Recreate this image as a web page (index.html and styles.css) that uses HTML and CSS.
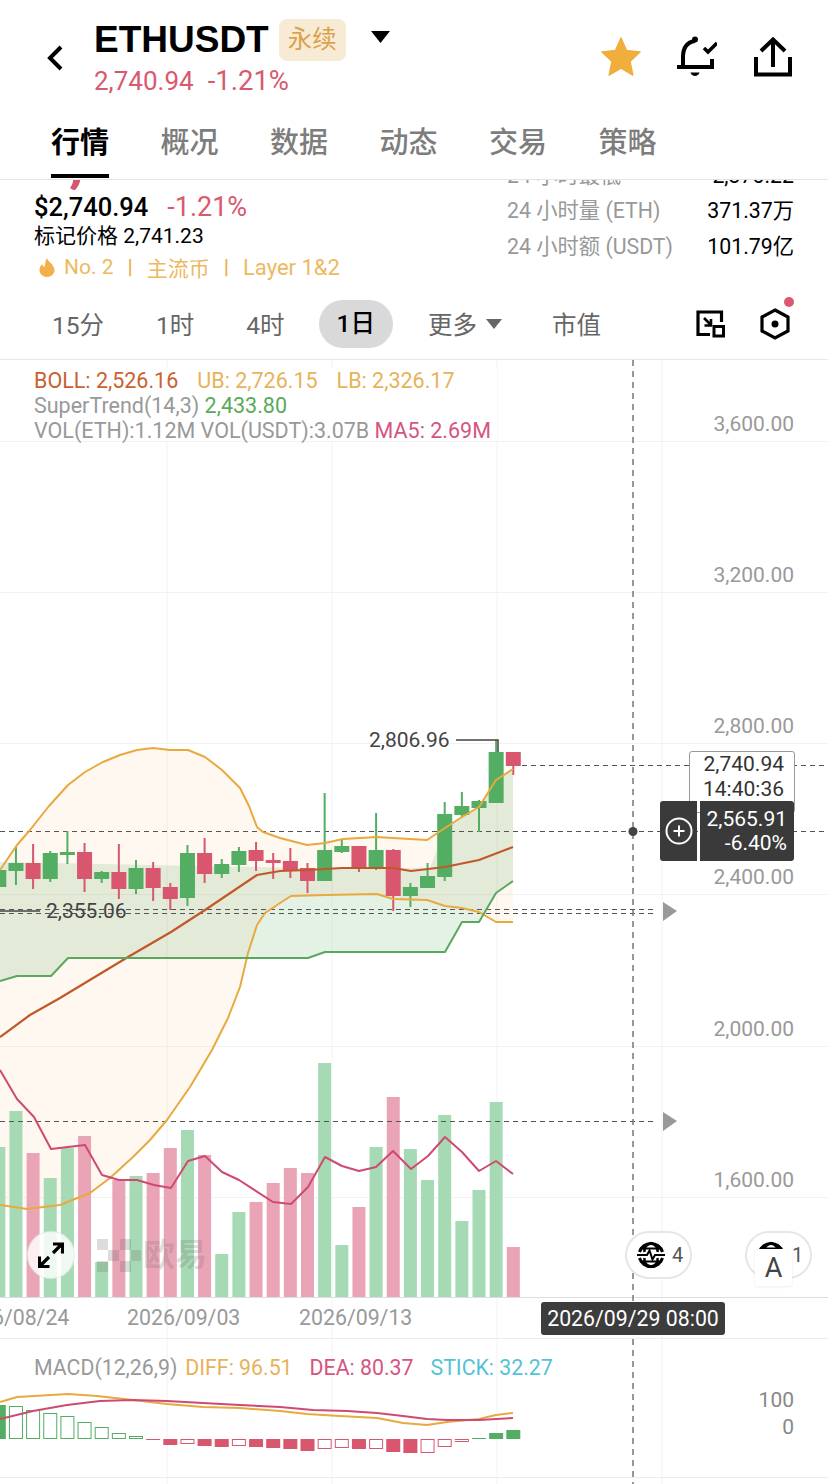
FILE: index.html
```html
<!DOCTYPE html>
<html lang="zh-CN">
<head>
    <meta charset="UTF-8">
    <meta name="viewport" content="width=device-width, initial-scale=1.0">
    <title>ETHUSDT 永续</title>
    <link rel="stylesheet" href="styles.css">
</head>
<body>

<header class="topbar">
    <div class="title-row">
        <svg class="back" width="16" height="26" viewBox="0 0 16 26"><path d="M14 2 L3 13 L14 24" fill="none" stroke="#000" stroke-width="4"/></svg>
        <div class="title-col">
            <div class="symbol-line">
                <span class="symbol">ETHUSDT</span>
                <span class="badge">永续</span>
                <svg class="caret" width="19" height="12" viewBox="0 0 19 12"><path d="M0 0 H19 L9.5 12 Z" fill="#000"/></svg>
            </div>
            <div class="sub-price"><span>2,740.94</span><span class="sub-change">-1.21%</span></div>
        </div>
        <div class="title-icons">
            <svg class="star" width="40" height="40" viewBox="0 0 40 40"><path d="M20 1 L25.5 13.5 L39 15 L29 24.5 L31.8 38 L20 31 L8.2 38 L11 24.5 L1 15 L14.5 13.5 Z" fill="#f0ae3c" stroke="#f0ae3c" stroke-width="1.5" stroke-linejoin="round"/></svg>
            <svg width="40" height="41" viewBox="0 0 40 41">
                <path d="M0 31 H37" stroke="#000" stroke-width="4"/>
                <path d="M6 30 V21 C6 11 11 6 18 5 M35 23 V30" fill="none" stroke="#000" stroke-width="4"/>
                <circle cx="18" cy="3.5" r="3"/>
                <path d="M13.5 36.5 H22.5 C21.5 41 14.5 41 13.5 36.5 Z"/>
                <path d="M27 12 L31 16 L40 7" fill="none" stroke="#000" stroke-width="3.5"/>
            </svg>
            <svg width="38" height="40" viewBox="0 0 38 40"><path d="M2 20 V37.5 H36 V20 M19 30 V3 M7 14 L19 2.5 L31 14" fill="none" stroke="#000" stroke-width="4"/></svg>
        </div>
    </div>
    <nav class="tabs">
        <a class="tab active">行情</a>
        <a class="tab">概况</a>
        <a class="tab">数据</a>
        <a class="tab">动态</a>
        <a class="tab">交易</a>
        <a class="tab">策略</a>
    </nav>
</header>

<section class="info">
    <div class="info-left">
        <div class="ghost-price"><span>,</span></div>
        <div class="price-line"><span class="last">$2,740.94</span><span class="change">-1.21%</span></div>
        <div class="mark-line">标记价格 2,741.23</div>
        <div class="tag-line">
            <svg width="16" height="19" viewBox="0 0 16 19"><path d="M8 0 C9 4 15 6 15.5 12 C15.5 16 12 19 8 19 C4 19 .5 16 .5 12 C.5 9 2 7 3.5 6 C3.5 8 4.5 9 5.5 9 C6.5 6 6 3 8 0 Z" fill="#f2b04c"/></svg>
            <span>No. 2</span><span class="sep">|</span><span>主流币</span><span class="sep">|</span><span class="layer">Layer 1&amp;2</span>
        </div>
    </div>
    <div class="info-right">
        <div class="stat"><span>24 小时最低</span><b>2,370.22</b></div>
        <div class="stat"><span>24 小时量 (ETH)</span><b>371.37万</b></div>
        <div class="stat"><span>24 小时额 (USDT)</span><b>101.79亿</b></div>
    </div>
</section>

<div class="periods">
    <a class="period">15分</a>
    <a class="period">1时</a>
    <a class="period">4时</a>
    <a class="period current">1日</a>
    <a class="period more">更多<i class="more-caret"></i></a>
    <a class="period">市值</a>
    <div class="period-icons">
        <svg width="29" height="28" viewBox="0 0 29 28">
            <path d="M14 24.5 H2 V2 H25.5 V12" fill="none" stroke="#000" stroke-width="3.2"/>
            <path d="M8 8 L15 15 M15 9 V15.5 H8.5" fill="none" stroke="#000" stroke-width="2.6"/>
            <rect x="18" y="16.5" width="9.5" height="9.5" fill="none" stroke="#000" stroke-width="3"/>
        </svg>
        <span class="hex-wrap">
            <svg width="30" height="32" viewBox="0 0 30 32"><path d="M15 2 L28 9 V23 L15 30 L2 23 V9 Z" fill="none" stroke="#000" stroke-width="3.2"/><circle cx="15" cy="16" r="3.5"/></svg>
            <i class="red-dot"></i>
        </span>
    </div>
</div>

<main class="chart">
    <svg id="plot" class="plot" width="828" height="1124" viewBox="0 360 828 1124"></svg>

    <div class="legend">
        <div><span class="c-boll">BOLL: 2,526.16</span><span class="c-band">UB: 2,726.15</span><span class="c-band">LB: 2,326.17</span></div>
        <div><span class="c-gray">SuperTrend(14,3)</span> <span class="c-green">2,433.80</span></div>
        <div><span class="c-gray">VOL(ETH):1.12M</span> <span class="c-gray">VOL(USDT):3.07B</span> <span class="c-ma">MA5: 2.69M</span></div>
    </div>

    <span class="axis-price p3600">3,600.00</span>
    <span class="axis-price p3200">3,200.00</span>
    <span class="axis-price p2800">2,800.00</span>
    <span class="axis-price p2400">2,400.00</span>
    <span class="axis-price p2000">2,000.00</span>
    <span class="axis-price p1600">1,600.00</span>

    <span class="mark-label high">2,806.96</span>
    <span class="mark-label low">2,355.06</span>

    <div class="now-box">2,740.94<br>14:40:36</div>
    <div class="cross-tip">
        <div class="cross-add">
            <svg width="28" height="28" viewBox="0 0 28 28"><circle cx="14" cy="14" r="12.5" fill="none" stroke="#fff" stroke-width="2"/><path d="M14 8.5 V19.5 M8.5 14 H19.5" stroke="#fff" stroke-width="2"/></svg>
        </div>
        <div class="cross-value">2,565.91<br>-6.40%</div>
    </div>

    <button class="expand">
        <svg width="26" height="26" viewBox="0 0 26 26"><path d="M15 11 L24 2 M15 2 H24.5 V11.5 M11 15 L2 24 M1.5 14.5 V24.5 H11.5" fill="none" stroke="#000" stroke-width="3.2"/></svg>
    </button>

    <div class="watermark">
        <svg width="44" height="33" viewBox="0 0 44 33">
            <rect x="0" y="0" width="11" height="11"/><rect x="0" y="22" width="11" height="11"/>
            <rect x="11" y="11" width="11" height="11"/>
            <rect x="23" y="0" width="11" height="11"/><rect x="23" y="22" width="11" height="11"/>
            <rect x="34" y="11" width="10" height="11"/>
        </svg>
        <span>欧易</span>
    </div>

    <div class="pill pill-one">
        <svg class="globe" width="28" height="28" viewBox="0 0 28 28"><use href="#globe-shape"/></svg>
        <span>4</span>
    </div>
    <div class="pill pill-two">
        <svg class="globe" width="28" height="28" viewBox="0 0 28 28"><use href="#globe-shape"/></svg>
        <span>1</span>
    </div>
    <div class="font-box">A</div>

    <span class="date-label d1">2026/08/24</span>
    <span class="date-label d2">2026/09/03</span>
    <span class="date-label d3">2026/09/13</span>
    <div class="date-tip">2026/09/29 08:00</div>

    <div class="macd-legend">
        <span class="c-gray macd-name">MACD(12,26,9)</span>
        <span class="c-band">DIFF: 96.51</span>
        <span class="c-ma">DEA: 80.37</span>
        <span class="c-stick">STICK: 32.27</span>
    </div>
    <span class="axis-price p100">100</span>
    <span class="axis-price p0">0</span>
</main>

<svg class="defs" width="0" height="0">
    <symbol id="globe-shape" viewBox="0 0 28 28">
        <path d="M2.5 11 A12 12 0 0 1 25.5 11 M2.5 17 A12 12 0 0 0 25.5 17" fill="none" stroke="#000" stroke-width="3"/>
        <path d="M14 2 C8 4 7 8 7.5 11 M14 2 C20 4 21 8 20.5 11 M14 26 C8 24 7 20 7.5 17 M14 26 C20 24 21 20 20.5 17" fill="none" stroke="#000" stroke-width="2.5"/>
        <path d="M3 7.5 H25 M3 20.5 H25" stroke="#000" stroke-width="2"/>
        <path d="M0 14 H10 L12.5 9.5 L15.5 18.5 L18 14 H28" fill="none" stroke="#000" stroke-width="2"/>
    </symbol>
</svg>

<script src="chart.js"></script>
</body>
</html>
```

FILE: styles.css
```css
/* General */
html, body {
    margin: 0;
    padding: 0;
    width: 828px;
    height: 1484px;
    overflow: hidden;
    background: #fff;
    font-family: Roboto, "Noto Sans CJK SC", sans-serif;
    color: #000;
}

svg {
    display: block;
}

.defs {
    position: absolute;
}

/* Top bar */
.topbar {
    position: relative;
    z-index: 2;
    height: 180px;
    box-sizing: border-box;
    background: #fff;
    border-bottom: 1px solid #e4e4e4;
}

.title-row {
    display: flex;
    align-items: center;
    height: 78px;
    padding: 19px 36px 0 47px;
}

.back {
    margin-right: 31px;
}

.symbol-line {
    display: flex;
    align-items: center;
    height: 42px;
}

.symbol {
    font-family: "Liberation Sans", sans-serif;
    font-size: 37px;
    font-weight: bold;
    line-height: 42px;
}

.badge {
    margin-left: 10px;
    padding: 0 9px;
    font-size: 24.5px;
    line-height: 42px;
    color: #dba24a;
    background: #f8ebd5;
    border-radius: 8px;
}

.caret {
    margin: -6px 0 0 25px;
}

.sub-price {
    display: flex;
    gap: 14px;
    margin-top: 4px;
    font-size: 26px;
    line-height: 32px;
    color: #d9596f;
}

.sub-change {
    font-size: 27.5px;
}

.title-icons {
    display: flex;
    align-items: center;
    gap: 37px;
    margin-left: auto;
    margin-top: -3px;
}

.star {
    margin-left: 1px;
    margin-right: -1px;
}

/* Tabs */
.tabs {
    display: flex;
    gap: 51.5px;
    padding: 26px 0 0 51px;
}

.tab {
    height: 52px;
    font-size: 29px;
    line-height: 40px;
    font-weight: 500;
    color: #7d7d7d;
}

.tab.active {
    height: 51px;
    color: #000;
    font-weight: 700;
    border-bottom: 4px solid #000;
}

/* Price info */
.info {
    display: flex;
    justify-content: space-between;
    height: 110px;
    padding: 0 34px;
}

/* tail of the large price that has scrolled under the top bar */
.ghost-price {
    height: 10px;
    margin: 0 0 2px 35px;
    overflow: hidden;
    font-size: 60px;
    line-height: 40px;
    font-weight: 700;
    color: #d9566f;
}

.ghost-price span {
    display: block;
    margin-top: -40px;
}

.price-line {
    display: flex;
    gap: 19px;
    font-size: 25.5px;
    line-height: 30px;
}

.last {
    font-weight: 500;
}

.change {
    font-size: 27px;
    color: #d9596f;
}

.mark-line {
    font-size: 21px;
    line-height: 29px;
}

.tag-line {
    display: flex;
    align-items: center;
    gap: 14px;
    height: 32px;
    padding-left: 5px;
    font-size: 21px;
    color: #edb95f;
}

.tag-line svg {
    margin-right: -5px;
}

.layer {
    font-size: 22px;
}

.sep {
    font-weight: 500;
    color: #e9b04e;
}

.info-right {
    width: 287px;
    margin-top: -22.5px;
}

.stat {
    display: flex;
    justify-content: space-between;
    font-size: 21.3px;
    line-height: 35.5px;
    color: #999;
}

.stat b {
    font-weight: 400;
    color: #000;
}

/* Period bar */
.periods {
    display: flex;
    align-items: center;
    height: 70px;
    box-sizing: border-box;
    padding: 0 38px 2px 52px;
    border-bottom: 1px solid #e8e8e8;
    font-size: 24.5px;
    color: #666;
}

.period {
    margin-right: 52px;
}

.period.current {
    margin: 0 35px 0 -18px;
    padding: 0 18px;
    height: 48px;
    line-height: 48px;
    font-weight: 500;
    color: #000;
    background: #d9d9d9;
    border-radius: 24px;
}

.period.more {
    display: flex;
    align-items: center;
    margin-right: 50px;
}

.more-caret {
    width: 0;
    height: 0;
    margin-left: 9px;
    border-left: 8px solid transparent;
    border-right: 8px solid transparent;
    border-top: 10px solid #666;
}

.period-icons {
    display: flex;
    align-items: center;
    gap: 35px;
    margin-left: auto;
}

.hex-wrap {
    position: relative;
}

.red-dot {
    position: absolute;
    top: -11px;
    right: -4px;
    width: 10px;
    height: 10px;
    background: #dc5770;
    border-radius: 50%;
}

/* Chart canvas */
.chart {
    position: relative;
    width: 828px;
    height: 1124px;
    overflow: hidden;
}

.plot {
    position: absolute;
    top: 0;
    left: 0;
}

.legend {
    position: absolute;
    top: 8px;
    left: 0;
    width: 463px;
    height: 73px;
    padding-left: 34px;
    background: #fff;
    font-size: 21.5px;
    line-height: 25px;
    white-space: nowrap;
}

.legend div:first-child span + span {
    margin-left: 19px;
}

.c-boll { color: #c9622f; }
.c-band { color: #e8b25a; }
.c-gray { color: #999; }
.c-green { color: #5aaa5c; }
.c-ma { color: #d6557f; }
.c-stick { color: #52c3d6; }

.axis-price {
    position: absolute;
    right: 34px;
    font-size: 21px;
    line-height: 26px;
    color: #999;
}

.p3600 { top: 51px; }
.p3200 { top: 202px; }
.p2800 { top: 353px; }
.p2400 { top: 504px; }
.p2000 { top: 656px; }
.p1600 { top: 807px; }
.p100 { top: 1027px; color: #888; }
.p0 { top: 1054px; color: #888; }

.mark-label {
    position: absolute;
    font-size: 21px;
    line-height: 26px;
    color: #444;
}

.mark-label.high {
    top: 367px;
    left: 369px;
}

.mark-label.low {
    top: 538px;
    left: 46px;
}

.now-box {
    position: absolute;
    top: 391px;
    left: 689px;
    width: 94px;
    height: 60px;
    padding-right: 10px;
    background: #fff;
    border: 1px solid #999;
    border-radius: 3px;
    font-size: 21px;
    line-height: 25px;
    text-align: right;
    color: #333;
}

.cross-tip {
    position: absolute;
    top: 441px;
    left: 660px;
    display: flex;
    width: 134px;
    height: 60px;
    color: #fff;
    font-size: 21px;
    line-height: 24px;
    text-align: right;
}

.cross-add {
    display: flex;
    align-items: center;
    justify-content: center;
    width: 37px;
    background: #3a3a3a;
    border-radius: 3px 0 0 3px;
}

.cross-value {
    width: 87px;
    margin-left: 3px;
    padding: 6px 7px 0 0;
    background: #3a3a3a;
    border-radius: 0 3px 3px 0;
    white-space: nowrap;
}

.expand {
    position: absolute;
    top: 871px;
    left: 27px;
    display: flex;
    align-items: center;
    justify-content: center;
    width: 48px;
    height: 48px;
    padding: 0;
    background: rgba(255, 255, 255, .82);
    border: 1px solid rgba(0, 0, 0, .07);
    border-radius: 50%;
}

.watermark {
    position: absolute;
    top: 879px;
    left: 97px;
    display: flex;
    align-items: center;
    gap: 2px;
    color: rgba(110, 110, 110, .24);
    fill: rgba(110, 110, 110, .24);
    font-size: 32px;
    font-weight: 700;
    line-height: 33px;
}

.pill {
    position: absolute;
    top: 871px;
    display: flex;
    align-items: center;
    gap: 7px;
    width: 67px;
    height: 48px;
    box-sizing: border-box;
    padding-left: 10px;
    background: #fff;
    border: 2px solid #e6e6e6;
    border-radius: 24px;
    font-size: 20px;
    color: #555;
}

.pill-one { left: 625px; }
.pill-two { left: 745px; }

.font-box {
    position: absolute;
    top: 889px;
    left: 755px;
    width: 37px;
    height: 37px;
    background: #fff;
    border-radius: 3px;
    box-shadow: 0 1px 3px rgba(0, 0, 0, .08);
    font-size: 27px;
    line-height: 39px;
    text-align: center;
    color: #444;
}

.date-label {
    position: absolute;
    top: 945px;
    font-size: 21.3px;
    line-height: 26px;
    color: #999;
}

.d1 { left: -44px; }
.d2 { left: 127px; }
.d3 { left: 299px; }

.date-tip {
    position: absolute;
    top: 942px;
    left: 541px;
    width: 184px;
    height: 33px;
    background: #3c3c3c;
    border-radius: 3px;
    font-size: 21.3px;
    line-height: 33px;
    text-align: center;
    color: #fff;
}

.macd-legend {
    position: absolute;
    top: 995px;
    left: 34px;
    display: flex;
    gap: 17px;
    font-size: 21.3px;
    line-height: 26px;
    white-space: nowrap;
}

.macd-name {
    margin-right: -9px;
}
```

FILE: chart.js
```js
// Daily candles, newest first. [top, bottom, wick top, wick bottom, up?] in page pixels
const candles = [
    [752, 766, 752, 775, 0], [752, 803, 740, 803, 1], [801, 808, 800, 832, 1], [806, 815, 792, 817, 1],
    [814, 877, 802, 881, 1], [876, 888, 863, 888, 1], [887, 896, 883, 907, 1], [850, 896, 849, 911, 0],
    [850, 867, 813, 870, 1], [846, 868, 846, 872, 0], [846, 852, 839, 853, 1], [850, 881, 793, 881, 1],
    [868, 881, 863, 893, 0], [861, 870, 848, 878, 0], [860, 863, 853, 879, 0], [850, 861, 842, 871, 0],
    [851, 865, 847, 872, 1], [864, 874, 859, 878, 1], [853, 874, 838, 883, 0], [853, 898, 845, 906, 1],
    [887, 899, 883, 910, 0], [868, 888, 862, 901, 0], [868, 889, 860, 894, 1], [872, 889, 844, 899, 0],
    [872, 879, 871, 883, 1], [852, 879, 843, 892, 0], [852, 855, 831, 864, 1], [853, 879, 851, 882, 1],
    [863, 879, 844, 889, 0], [863, 871, 847, 885, 1], [870, 887, 862, 910, 1]
];
const volumes = [1247, 1102, 1190, 1221, 1115, 1180, 1149, 1097, 1147, 1207, 1245, 1063, 1173, 1168, 1183, 1202,
    1212, 1254, 1155, 1130, 1148, 1173, 1176, 1180, 1262, 1136, 1148, 1178, 1153, 1111, 1147];
// MACD histogram: far end of each bar, and whether it is drawn hollow
const macd = [[1430, 0], [1433, 0], [1438, 0], [1442, 1], [1447, 1], [1453, 1], [1453, 0], [1452, 0], [1449, 1], [1449, 0],
    [1448, 1], [1449, 1], [1451, 0], [1449, 0], [1448, 0], [1447, 0], [1446, 1], [1447, 0], [1446, 0], [1444, 1],
    [1445, 0], [1440, 0], [1436, 1], [1433, 1], [1427, 1], [1422, 1], [1416, 1], [1413, 1], [1410, 1], [1406, 1], [1405, 0]];

const ub = "0,870 17,845 30,830 49,806 68,785 85,772 103,762 120,755 137,750 153,748 170,750 188,750 205,757 222,770 240,788 249,806 257,827 263,832 280,838 307,845 325,843 343,839 377,837 393,838 427,840 445,828 462,817 479,807 496,780 513,769";
const lb = "0,1205 27,1209 60,1205 90,1193 110,1178 133,1157 150,1140 167,1120 190,1087 212,1050 228,1018 240,987 248,953 257,925 265,913 280,903 291,896 325,895 377,894 393,899 427,900 445,906 462,908 479,912 496,922 513,922";
const boll = "0,1037 30,1015 60,998 128,957 171,932 205,910 257,875 280,871 308,870 342,868 393,868 411,871 445,867 479,860 513,847";
const trend = "0,981 17,976 51,976 68,958 308,958 325,952 445,952 462,922 479,922 496,893 513,881";
const trendTop = "0,862 300,868 430,868 445,828 462,817 479,807 496,780 513,769";
const ma5 = "0,1070 17,1099 34,1117 51,1149 68,1147 85,1145 102,1175 119,1180 137,1180 154,1185 171,1188 188,1161 205,1156 222,1172 239,1180 273,1202 291,1204 308,1187 325,1157 342,1166 359,1171 376,1167 393,1151 411,1169 428,1156 445,1137 462,1152 479,1171 496,1161 513,1174";
const diff = "0,1402 17,1397 68,1394 97,1396 133,1400 167,1404 203,1407 240,1408 280,1411 307,1414 340,1416 377,1418 403,1423 427,1425 447,1422 479,1419 496,1415 513,1413";
const dea = "0,1419 33,1411 67,1405 100,1401 133,1400 167,1401 203,1403 240,1405 280,1407 313,1410 347,1411 377,1413 403,1416 427,1419 447,1420 479,1420 513,1418";

const GREEN = "#53ad62", RED = "#d9566f";
const xAt = (k) => 513.3 - 17.15 * k;
let out = "";

function hline(y, x1, x2, color) {
    out += `<line x1="${x1}" x2="${x2}" y1="${y}" y2="${y}" stroke="${color}"/>`;
}
function dashed(y, x1, x2) {
    out += `<line x1="${x1}" x2="${x2}" y1="${y}" y2="${y}" stroke="#555" stroke-dasharray="5 4"/>`;
}
function poly(points, color, width) {
    out += `<polyline points="${points}" fill="none" stroke="${color}" stroke-width="${width}" stroke-linejoin="round"/>`;
}
function reversed(points) {
    return points.split(" ").reverse().join(" ");
}

// Grid
[441, 592, 743, 894, 1046, 1197].forEach((y) => hline(y + 0.5, 0, 828, "#f2f2f2"));
[167, 332, 497, 662].forEach((x) => {
    out += `<line x1="${x}" x2="${x}" y1="360" y2="1484" stroke="#f2f2f2"/>`;
});
hline(1297.5, 0, 828, "#dedede");
hline(1338.5, 0, 828, "#ececec");
hline(1477.5, 0, 828, "#ececec");

// Bands and trend area
out += `<polygon points="${ub} ${reversed(lb)}" fill="rgba(245,170,70,.08)"/>`;
out += `<polygon points="${trendTop} ${reversed(trend)}" fill="rgba(85,170,95,.16)"/>`;

// Volume
volumes.forEach((top, k) => {
    const color = candles[k][4] ? "#a6dab5" : "#e9a4b6";
    out += `<rect x="${xAt(k) - 6.5}" y="${top}" width="13" height="${1297 - top}" fill="${color}"/>`;
});

// Price reference lines
dashed(765.5, 513, 828);
dashed(831.5, 0, 828);
dashed(909.5, 0, 655);
dashed(913.5, 0, 655);
dashed(1121.5, 0, 655);
out += `<line x1="633" x2="633" y1="360" y2="1484" stroke="#777" stroke-width="1.5" stroke-dasharray="6 5"/>`;
out += `<circle cx="633" cy="831.5" r="4.5" fill="#444"/>`;
out += `<path d="M663 902 L677 911 L663 921 Z M663 1112 L677 1121 L663 1131 Z" fill="#999"/>`;

// Candles
candles.forEach(([top, bottom, wickTop, wickBottom, up], k) => {
    const color = up ? GREEN : RED, x = xAt(k);
    out += `<line x1="${x}" x2="${x}" y1="${wickTop}" y2="${wickBottom}" stroke="${color}" stroke-width="2"/>`;
    out += `<rect x="${x - 7.5}" y="${top}" width="15" height="${bottom - top}" fill="${color}"/>`;
});

// Overlay lines
poly(ub, "#e8a93f", 2);
poly(lb, "#e8a93f", 2);
poly(boll, "#c1582a", 2.2);
poly(trend, "#5aa85e", 2);
poly(ma5, "#cf4a72", 2);

// High and low markers
out += `<path d="M456 740 H498 V752" fill="none" stroke="#444" stroke-width="1.5"/>`;
out += `<line x1="0" x2="40" y1="911" y2="911" stroke="#444" stroke-width="1.5"/>`;

// MACD
macd.forEach(([end, hollow], k) => {
    const color = k < 3 || k > 21 ? GREEN : RED;
    const top = Math.min(end, 1439), h = Math.max(Math.abs(end - 1439), 1), x = xAt(k) - 7;
    if (hollow) {
        out += `<rect x="${x + 0.5}" y="${top + 0.5}" width="13" height="${h - 1}" fill="#fff" stroke="${color}"/>`;
    } else {
        out += `<rect x="${x}" y="${top}" width="14" height="${h}" fill="${color}"/>`;
    }
});
poly(diff, "#e8a93f", 2);
poly(dea, "#cf4a72", 2);

document.getElementById("plot").innerHTML = out;
```
